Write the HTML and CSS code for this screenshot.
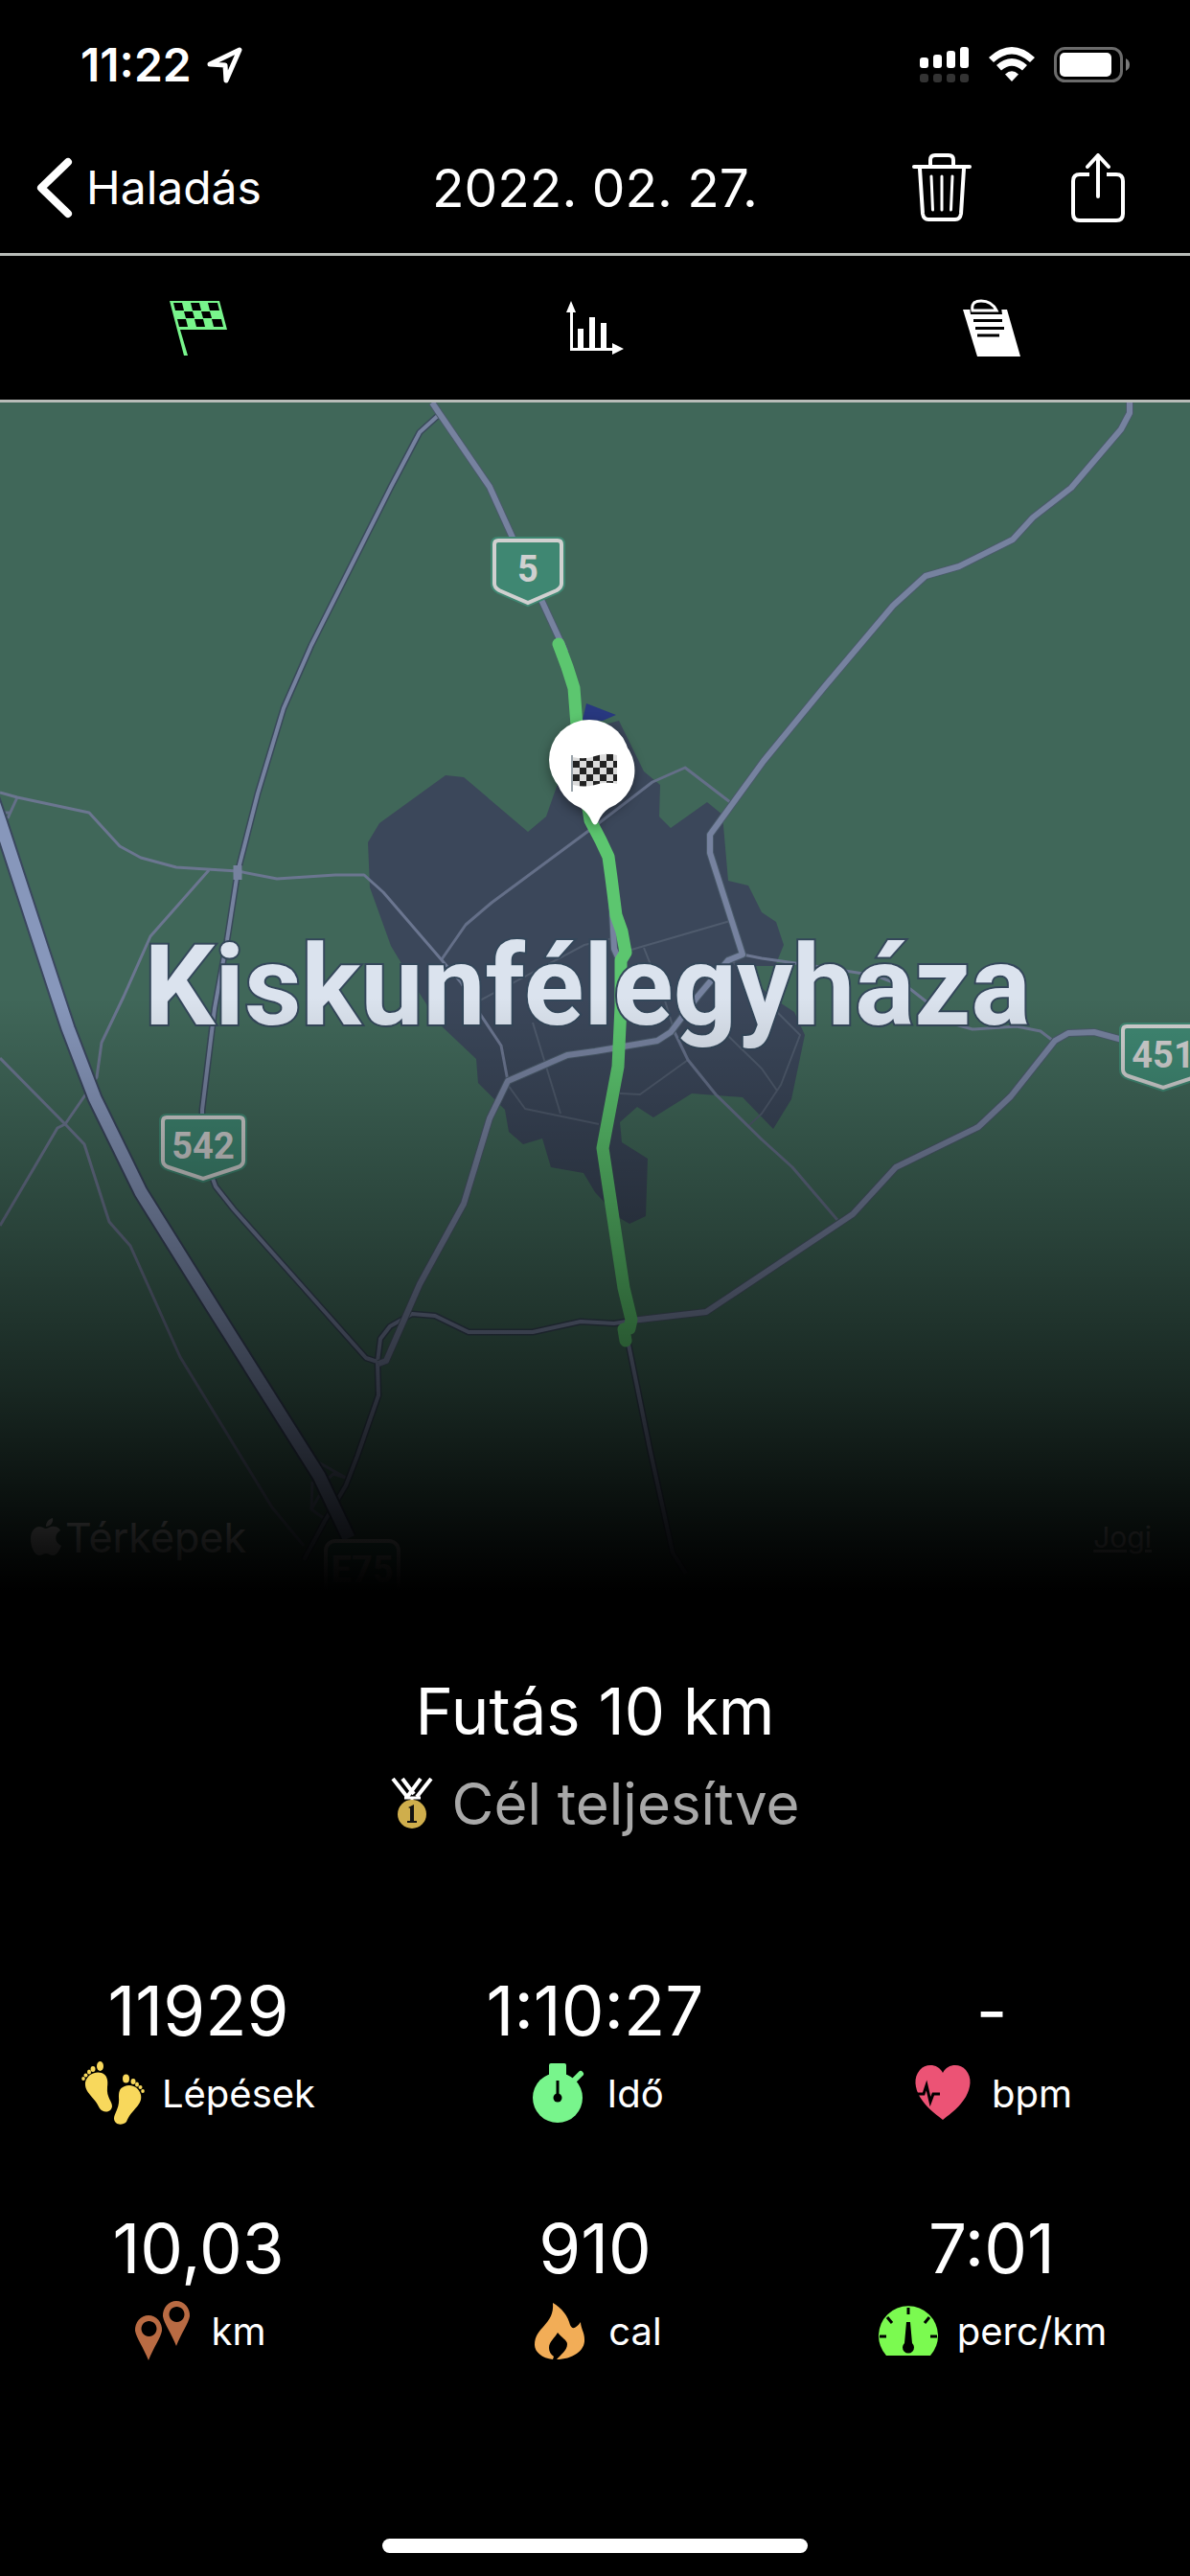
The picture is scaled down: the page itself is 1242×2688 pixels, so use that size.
FILE: index.html
```html
<!DOCTYPE html>
<html lang="hu">
<head>
  <meta charset="UTF-8">
  <meta name="viewport" content="width=device-width, initial-scale=1.0">
  <title>Futás 10 km</title>
  <link rel="stylesheet" href="styles.css">
</head>
<body>
  <!-- status bar -->
  <div class="status">
    <div class="status-left">
      <span class="clock">11:22</span>
      <svg width="38" height="38" viewBox="0 0 38 38" fill="none" stroke="#fff" stroke-width="5" stroke-linejoin="round"><path d="M3 18 L34 3 L20 35 L19 19 Z"/></svg>
    </div>
    <div class="status-right">
      <svg width="52" height="38" viewBox="0 0 52 38" fill="#fff">
        <rect x="0" y="11" width="9" height="11" rx="3"/><rect x="14" y="8" width="9" height="14" rx="3"/><rect x="28" y="4" width="9" height="18" rx="3"/><rect x="42" y="0" width="9" height="22" rx="3"/>
        <g fill="#333"><rect x="0" y="28" width="9" height="9" rx="3"/><rect x="14" y="28" width="9" height="9" rx="3"/><rect x="28" y="28" width="9" height="9" rx="3"/><rect x="42" y="28" width="9" height="9" rx="3"/></g>
      </svg>
      <svg width="48" height="38" viewBox="0 0 48 38" fill="#fff">
        <path d="M0 11 Q24 -11 48 11 L43 16 Q24 -1 5 16 Z"/>
        <path d="M8 19 Q24 5 40 19 L35 24.500 Q24 15 13 24.500 Z"/>
        <path d="M17 28.500 Q24 22 31 28.500 L24 36 Z"/>
      </svg>
      <svg width="80" height="38" viewBox="0 0 80 38">
        <rect x="1.500" y="1.500" width="69" height="34" rx="10" fill="none" stroke="#6b6b6b" stroke-width="3"/>
        <rect x="6" y="6" width="54" height="25" rx="5" fill="#fff"/>
        <path d="M75 12 Q79 14 79 18.500 Q79 23 75 25 Z" fill="#7a7a7a"/>
      </svg>
    </div>
  </div>

  <!-- navigation bar -->
  <header class="navbar">
    <button class="back" type="button">
      <svg width="38" height="64" viewBox="0 0 38 64" fill="none" stroke="#fff" stroke-width="8" stroke-linecap="round" stroke-linejoin="round"><path d="M33 5 L5 32 L33 59"/></svg>
      Haladás
    </button>
    <h1 class="date">2022. 02. 27.</h1>
    <div class="actions">
      <button type="button" aria-label="Törlés">
        <svg width="62" height="72" viewBox="0 0 62 72" fill="none" stroke="#fff" stroke-width="4" stroke-linecap="round" stroke-linejoin="round">
          <path d="M2 14 H60"/><path d="M19 13 V7 Q19 2 24 2 H38 Q43 2 43 7 V13"/><path d="M8 16 L11 63 Q12 69 17 69 H45 Q50 69 51 63 L54 16"/><path stroke-width="3" d="M20 24 L21.500 59 M31 24 V59 M42 24 L40.500 59"/>
        </svg>
      </button>
      <button type="button" aria-label="Megosztás">
        <svg width="56" height="72" viewBox="0 0 56 72" fill="none" stroke="#fff" stroke-width="4" stroke-linecap="round" stroke-linejoin="round">
          <path stroke-linecap="butt" d="M19 22 H9 Q2 22 2 29 V63 Q2 70 9 70 H47 Q54 70 54 63 V29 Q54 22 47 22 H37"/><path d="M28 45 V3 M17 14 L28 2 L39 14"/>
        </svg>
      </button>
    </div>
  </header>

  <!-- tabs -->
  <nav class="tabs">
    <button type="button" aria-label="Összegzés">
      <svg width="60" height="60" viewBox="0 0 60 60">
        <path d="M0 2 H52 L60 32 H11 L19 59 H15 Z" fill="#78f58c"/>
        <g fill="#000">
          <path d="M4 4 h9 l2 8 h-9z M22 4 h9 l2 8 h-9z M40 4 h10 l2 8 h-10z"/>
          <path d="M15 13 h9 l2 7 h-9z M33 13 h9 l2 7 h-9z"/>
          <path d="M8 21 h9 l2 8 h-9z M26 21 h9 l2 8 h-9z M44 21 h10 l2 8 h-10z"/>
        </g>
      </svg>
    </button>
    <button type="button" aria-label="Grafikon">
      <svg width="60" height="60" viewBox="0 0 60 60" fill="#fff">
        <path d="M0 14 L5 2 L10 14 H7 V51 H48 V46 L60 52 L48 58 V54 H4 V14 Z"/>
        <path d="M12 31 h6 v21 h-6z M24 19 h6 v33 h-6z M36 25 h6 v27 h-6z"/>
      </svg>
    </button>
    <button type="button" aria-label="Jegyzet">
      <svg width="60" height="60" viewBox="0 0 60 60">
        <path d="M0 11 H46 L60 60 H15 Z" fill="#fff"/>
        <path d="M7 9 H40 L41 16 H8 Z" fill="#000"/>
        <path d="M10 12 Q8 2 19 2 Q30 2 35 12 Z" fill="#000" stroke="#fff" stroke-width="3"/>
        <path d="M11 22.500 H41 M13 30.500 H43 M15 38 H38" stroke="#000" stroke-width="3"/>
      </svg>
    </button>
  </nav>

  <!-- route map -->
  <section class="map">
    <svg class="map-canvas" viewBox="0 420 1242 1240" preserveAspectRatio="xMidYMin slice">
      <defs>
        <pattern id="check" width="14" height="14" patternUnits="userSpaceOnUse" x="598" y="787">
          <rect width="14" height="14" fill="#dcdcdc"/><path d="M7 0h7v7h-7z M0 7h7v7h-7z" fill="#222"/>
        </pattern>
        <!-- roads drawn twice: dark casing, then fill -->
        <g id="main-roads">
          <path d="M451 420 L459 432 L511 508 L535 561 L590 680"/>
          <path d="M1179 420 L1179 431 L1170 448 L1118 509 L1078 540 L1057 563 L1001 591 L966 601 L932 632 L861 716 L797 794 L741 871 L741 890 L775 996 L760 1002 L728 1040 L700 1077 L686 1086 L621 1097 L592 1101 L530 1128 L511 1167 L484 1256 L438 1340 L403 1420 L395 1423"/>
          <path d="M659 1378 L737 1369 L890 1267 L935 1218 L1021 1176 L1055 1144 L1101 1086 L1115 1078 L1142 1077 L1190 1090"/>
          <path d="M638 930 L641 990 L650 1010"/>
        </g>
        <g id="side-roads">
          <path d="M459 432 L438 451 L408 508 L325 673 L296 739 L269 828 L248 910 L237 981 L224 1052 L211 1158 L211 1200 L225 1238 L244 1262 L382 1417 L394 1421 L395 1456 L373 1519 L361 1550 L339 1587 L317 1628"/>
          <path d="M394 1421 L397 1397 L407 1384 L430 1371 L454 1373 L489 1390 L556 1390 L606 1379 L641 1381 L660 1378"/>
          <path d="M655 1398 L678 1511 L702 1620 L716 1642"/>
        </g>
        <path id="motorway" d="M-10 828 L0 857 L60 1040 L71 1073 L99 1146 L147 1244 L222 1364 L333 1540 L364 1605"/>
      </defs>

      <rect y="420" width="1242" height="1240" fill="#406759"/>
      <path fill="#3b475a" d="M465 809 L484 811 L551 868 L570 852 L582 818 L600 765 L635 755 L646 752 L672 805 L689 819 L688 852 L700 864 L738 837 L754 850 L760 919 L781 924 L795 952 L810 962 L818 986 L809 1008 L779 1008 L787 1022 L803 1039 L829 1056 L840 1080 L826 1147 L807 1178 L775 1145 L722 1141 L682 1166 L665 1155 L647 1171 L649 1192 L676 1209 L674 1269 L657 1277 L645 1270 L621 1244 L609 1224 L575 1218 L566 1188 L546 1194 L531 1181 L527 1158 L499 1130 L497 1105 L459 1069 L440 1040 L408 987 L386 926 L384 879 L396 859 Z"/>
      <path fill="#28387f" d="M612 734 L643 746 L629 752 L608 751 Z"/>

      <g fill="none" stroke-linejoin="round">
        <g stroke="#4f5b6d" stroke-width="2">
          <path d="M659 991 L762 961 M672 989 L694 1044 L704 1077 M497 1046 L610 986 L640 979"/>
          <path d="M556 1067 L585 1162 M530 1132 L548 1157 L625 1173 M718 1106 L668 1142 L647 1141"/>
          <path d="M762 1000 L813 1058 L835 1080 L815 1132 L795 1162 L781 1175 M760 1081 L795 1115 L811 1138"/>
        </g>
        <g stroke="#646f88" stroke-width="3">
          <path d="M461 1001 L486 965 L513 942 L621 862 L681 816 L715 801 L762 837"/>
          <path d="M704 1077 L718 1106 L747 1142 L795 1189 L827 1218 L874 1273"/>
          <path d="M18 832 L8 854 M2 848 L10 848"/>
          <path d="M327 1523 L361 1542 L348 1538 L341 1544 M326 1546 L325 1575 L339 1585 M325 1575 L333 1561 L341 1561"/>
        </g>
        <g stroke="#6b7690" stroke-width="3">
          <path d="M0 827 L18 832 L93 848 L125 883 L147 895 L184 905 L248 909 L289 917 L350 913 L380 913 L400 931 L481 1025 L497 1052 L523 1091 L530 1128"/>
          <path d="M218 908 L157 977 L129 1040 L106 1088 L101 1124 L88 1144 L68 1173 L60 1177 L0 1279"/>
          <path d="M0 1104 L68 1173 L88 1194 L114 1275 L136 1300 L188 1416 L284 1573 L317 1613"/>
          <path d="M775 996 L795 1000 L837 1006 L914 1018 L950 1032 L973 1050 L997 1069 L1015 1074 L1061 1071 L1086 1076 L1099 1086"/>
        </g>
        <use href="#side-roads" stroke="#39495a" stroke-width="7"/>
        <use href="#side-roads" stroke="#76829f" stroke-width="4"/>
        <use href="#main-roads" stroke="#4a5a6a" stroke-width="8"/>
        <use href="#main-roads" stroke="#76829f" stroke-width="6"/>
        <path d="M248 903 V918" stroke="#76829f" stroke-width="9"/>
        <use href="#motorway" stroke="#3a475e" stroke-width="17"/>
        <use href="#motorway" stroke="#8797bb" stroke-width="13"/>
        <!-- the run -->
        <path stroke="#5cc66f" stroke-width="13" stroke-linecap="round" d="M583 672 L592 696 L599 718 L602 757 L610 820 L616 856 L627 877 L635 894 L638 916 L643 955 L649 972 L653 994 L648 1002 L648 1050 L645 1113 L629 1198 L651 1344 L659 1377 L657 1386 L651 1387 L653 1399"/>
      </g>

      <text class="city" x="613" y="1069">Kiskunfélegyháza</text>

      <g class="shield">
        <path class="shield-edge" d="M520 564 H582 Q586 564 586 568 V609 Q586 613 581 616 L551 629 L521 616 Q516 613 516 609 V568 Q516 564 520 564 Z"/>
        <path d="M520 564 H582 Q586 564 586 568 V609 Q586 613 581 616 L551 629 L521 616 Q516 613 516 609 V568 Q516 564 520 564 Z"/>
        <text x="551" y="607">5</text>
        <path class="shield-edge" d="M174 1166 H250 Q254 1166 254 1170 V1211 Q254 1216 248 1218 L212 1230 L176 1218 Q170 1216 170 1211 V1170 Q170 1166 174 1166 Z"/>
        <path d="M174 1166 H250 Q254 1166 254 1170 V1211 Q254 1216 248 1218 L212 1230 L176 1218 Q170 1216 170 1211 V1170 Q170 1166 174 1166 Z"/>
        <text x="212" y="1209">542</text>
        <path class="shield-edge" d="M1176 1071 H1252 Q1256 1071 1256 1075 V1116 Q1256 1121 1250 1123 L1214 1135 L1178 1123 Q1172 1121 1172 1116 V1075 Q1172 1071 1176 1071 Z"/>
        <path d="M1176 1071 H1252 Q1256 1071 1256 1075 V1116 Q1256 1121 1250 1123 L1214 1135 L1178 1123 Q1172 1121 1172 1116 V1075 Q1172 1071 1176 1071 Z"/>
        <text x="1214" y="1114">451</text>
        <rect x="340" y="1608" width="76" height="66" rx="10"/>
        <text x="378" y="1651">E75</text>
      </g>

      <!-- start and finish pins -->
      <g class="pin">
        <circle cx="615" cy="793" r="42" fill="#fff"/>
        <path d="M621 762 A42 42 0 0 1 636 843 Q628 848 624 858 Q621 863 618 858 Q614 848 606 843 A42 42 0 0 1 621 762 Z" fill="#fff"/>
      </g>
      <path d="M597 788 V826" stroke="#9aa3aa" stroke-width="2"/>
      <path d="M598 790 Q610 793 621 789 Q633 785 644 788 V818 Q633 815 621 819 Q610 822 598 819 Z" fill="url(#check)"/>
    </svg>
    <div class="map-credits">
      <span class="maps-logo">
        <svg width="32" height="40" viewBox="0 0 32 40" fill="#fff"><path d="M16 11 C19 11 21 8 25 9 C28 9 30 11 31 13 C24 17 25 26 32 29 C30 34 27 39 23 39 C20 39 19 37 16 37 C13 37 12 39 9 39 C4 39 0 30 0 22 C0 13 5 9 9 9 C12 9 14 11 16 11 Z M16 9 C16 4 19 1 23 0 C24 5 20 9 16 9 Z"/></svg>
        Térképek
      </span>
      <a class="legal" href="#">Jogi</a>
    </div>
  </section>

  <!-- result -->
  <section class="result">
    <h2>Futás 10 km</h2>
    <p>
      <svg width="44" height="54" viewBox="0 0 44 54">
        <path d="M2 1 L17 20 M12 1 L24 17 M31 1 L17 20 M42 1 L27 20" stroke="#fff" stroke-width="4" fill="none"/>
        <path d="M14 21 H31 M22 20 V26" stroke="#fff" stroke-width="3"/>
        <circle cx="22" cy="38" r="15" fill="#cfae4c"/>
        <path d="M18 31 L24 28 V45 H27 V47 H17 V45 H20 V32 Z" fill="#111"/>
      </svg>
      Cél teljesítve
    </p>
  </section>

  <dl class="stats">
    <div class="stat">
      <dd>11929</dd>
      <dt>
        <svg width="66" height="66" viewBox="0 0 66 66" fill="#f8d85c">
          <path d="M4 22 C6 13 15 10 21 12 C27 14 28 20 27 27 C26 38 32 41 32 47 C31 54 22 54 19 49 C13 36 3 33 4 22 Z"/>
          <path d="M62 35 C60 26 51 23 45 26 C39 28 39 33 39 38 C40 49 34 54 34 60 C35 67 43 67 47 63 C53 49 64 46 62 35 Z"/>
          <ellipse cx="19.500" cy="5" rx="3.500" ry="5"/><ellipse cx="12" cy="8" rx="2.500" ry="3"/><ellipse cx="8" cy="11" rx="2" ry="2.500"/><ellipse cx="4.500" cy="14.500" rx="2" ry="2"/><ellipse cx="2" cy="18" rx="1.800" ry="2"/>
          <ellipse cx="46.500" cy="18" rx="3.500" ry="4.500"/><ellipse cx="54" cy="21" rx="2.500" ry="3"/><ellipse cx="58" cy="24" rx="2" ry="2.500"/><ellipse cx="61.500" cy="27" rx="2" ry="2"/><ellipse cx="64" cy="31" rx="1.800" ry="2"/>
        </svg>
        Lépések
      </dt>
    </div>
    <div class="stat">
      <dd>1:10:27</dd>
      <dt>
        <svg width="66" height="66" viewBox="0 0 66 66" fill="#78f58c">
          <circle cx="33" cy="38" r="26"/><rect x="24" y="2" width="18" height="14" rx="2"/>
          <path d="M50 20 L57 13" stroke="#78f58c" stroke-width="6" stroke-linecap="round"/>
          <path d="M33 20 V36" stroke="#000" stroke-width="3"/><circle cx="33" cy="38" r="4.500" fill="#000"/>
        </svg>
        Idő
      </dt>
    </div>
    <div class="stat">
      <dd>-</dd>
      <dt>
        <svg width="66" height="66" viewBox="0 0 66 66">
          <path d="M33 12 C28 2 15 2 9 9 C2 17 4 28 9 37 C15 47 24 54 33 61 C42 54 51 47 57 37 C62 28 64 17 57 9 C51 2 38 2 33 12 Z" fill="#ec5375"/>
          <path d="M6 34 H13 L16 25 L20 42 L23 34 H30" fill="none" stroke="#000" stroke-width="3"/>
        </svg>
        bpm
      </dt>
    </div>
    <div class="stat">
      <dd>10,03</dd>
      <dt>
        <svg width="66" height="66" viewBox="0 0 66 66" fill="#b96b43" fill-rule="evenodd">
          <path d="M18 17 A14 15 0 0 1 32 33 C31 40 23 51 18 64 C13 51 5 40 4 33 A14 15 0 0 1 18 17 Z M18 23 a8 8 0 1 0 1 0 Z"/>
          <path d="M47 2 A14 15 0 0 1 61 18 C60 25 52 36 47 49 C42 36 34 25 33 18 A14 15 0 0 1 47 2 Z M47 8 a8 8 0 1 0 1 0 Z"/>
        </svg>
        km
      </dt>
    </div>
    <div class="stat">
      <dd>910</dd>
      <dt>
        <svg width="66" height="66" viewBox="0 0 66 66" fill="#f2ad57">
          <path d="M26 4 C35 9 42 18 44 27 C46 32 50 31 55 24 C55 30 59 35 59 42 C60 54 46 63 30 63 C34 58 41 54 41 47 C41 43 35 40 31 35 C28 41 22 44 22 51 C22 55 24 58 27 60 L26 63 C15 62 7 55 7 48 C7 29 28 27 26 4 Z"/>
        </svg>
        cal
      </dt>
    </div>
    <div class="stat">
      <dd>7:01</dd>
      <dt>
        <svg width="66" height="66" viewBox="0 0 66 66">
          <path d="M10 59 A31 31 0 1 1 56 59 Z" fill="#7bfa50"/>
          <path d="M33 9 V16 M11 19 L16 25 M55 19 L50 25 M3 39 H10 M56 39 H63" stroke="#000" stroke-width="3"/>
          <path d="M31 24 H35 L37 46 A6 6 0 1 1 29 46 Z" fill="#000"/>
        </svg>
        perc/km
      </dt>
    </div>
  </dl>

  <div class="home-indicator"></div>
</body>
</html>
```

FILE: styles.css
```css
* { box-sizing: border-box; }
body { display: flex; flex-direction: column; min-height: 100vh; margin: 0; background: #000; color: #fff; font-family: Inter, "Liberation Sans", sans-serif; }
svg { display: block; flex: none; }
h1, h2, p, dl, dd, dt { margin: 0; font-weight: 400; }
button { padding: 0; border: 0; background: none; color: inherit; font: inherit; cursor: pointer; }

.status { display: flex; justify-content: space-between; align-items: center; height: 136px; padding: 0 62px 0 84px; }
.status-left { display: flex; align-items: center; gap: 16px; }
.status-right { display: flex; align-items: center; gap: 20px; }
.clock { font-size: 48px; font-weight: 600; line-height: 56px; }

.navbar { display: grid; grid-template-columns: 1fr auto 1fr; align-items: center; height: 131px; padding-bottom: 8px; border-bottom: 3px solid #b8bcb8; }
.back { display: flex; align-items: center; gap: 14px; padding-left: 38px; font-size: 48px; line-height: 64px; }
.date { font-size: 55px; line-height: 64px; }
.actions { display: flex; justify-content: flex-end; gap: 104px; padding-right: 68px; }

.tabs { display: grid; grid-template-columns: repeat(3, 1fr); height: 153px; border-bottom: 3px solid #b8bcb8; }
.tabs button { display: flex; align-items: center; justify-content: center; }

.map { position: relative; height: 1240px; overflow: hidden; }
.map-canvas { width: 100%; height: 100%; }
.map::after { content: ""; position: absolute; inset: 0; background: linear-gradient(transparent 50%, rgba(0, 0, 0, 0.36) 70%, rgba(0, 0, 0, 0.62) 83%, rgba(0, 0, 0, 0.92) 96%, #000 100%); pointer-events: none; }
.city { font-size: 116px; font-weight: 700; font-family: Roboto, "Liberation Sans", sans-serif; text-anchor: middle; fill: #dbe3ee; stroke: #34475a; stroke-width: 4px; paint-order: stroke; }
.shield path, .shield rect { fill: #3f8772; stroke: #d0d0d0; stroke-width: 4px; }
.shield .shield-edge { stroke: #3f8772; stroke-width: 8px; }
.shield text { font-size: 38px; font-weight: 700; font-family: Roboto, "Liberation Sans", sans-serif; text-anchor: middle; fill: #d0d0d0; }
.pin { filter: drop-shadow(0 4px 6px rgba(0, 0, 0, 0.4)); }
.map-credits { position: absolute; left: 32px; right: 40px; bottom: 28px; display: flex; justify-content: space-between; align-items: center; }
.maps-logo { display: flex; align-items: center; gap: 4px; font-size: 43px; line-height: 56px; }
.legal { color: #ccc; font-size: 30px; }

.result { display: flex; flex-direction: column; align-items: center; padding-top: 78px; }
.result h2 { font-size: 67px; line-height: 96px; }
.result p { display: flex; align-items: center; gap: 20px; color: #a8a8a8; font-size: 60px; line-height: 96px; }

.stats { display: grid; grid-template-columns: repeat(3, 1fr); row-gap: 76px; padding-top: 120px; }
.stat { display: flex; flex-direction: column; align-items: center; }
.stat dd { font-size: 71px; line-height: 96px; }
.stat dt { display: flex; align-items: center; gap: 18px; height: 76px; font-size: 40px; }

.home-indicator { width: 444px; height: 15px; margin: auto auto 24px; border-radius: 8px; background: #fff; }
```
